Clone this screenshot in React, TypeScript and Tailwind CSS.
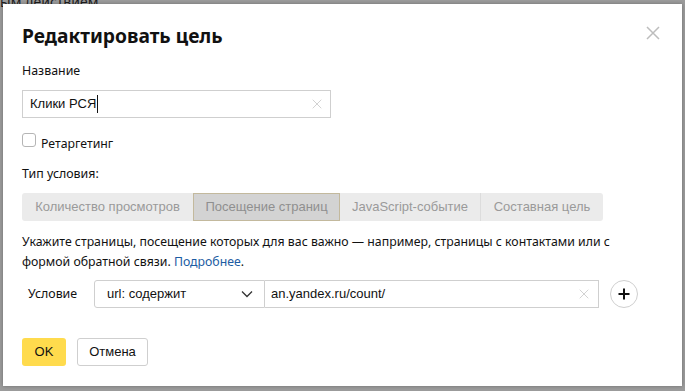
import React from "react";

const sans = "font-['Noto_Sans','Open_Sans',sans-serif]";
const arial = "font-['Liberation_Sans',Arial,sans-serif]";

function XIcon({ size, color, stroke }: { size: number; color: string; stroke: number }) {
  return (
    <svg width={size} height={size} viewBox="0 0 14 14" fill="none">
      <path d="M1 1L13 13M13 1L1 13" stroke={color} strokeWidth={stroke} />
    </svg>
  );
}

export default function App() {
  return (
    <div className="relative w-[685px] h-[391px] overflow-hidden bg-[#9c9c9c]">
      <div className={`absolute left-0 top-[-9px] text-[14px] text-[#1e1e1e] ${sans}`}>ым действием.</div>
      <div className="absolute left-[3px] top-[4px] w-[679px] h-[382px] bg-white shadow-[0_0_4px_rgba(0,0,0,0.3)]">
        <div className="flex flex-col px-[19px] pt-[18px]">
          <div className="flex items-start justify-between">
            <h1 className={`text-[19.2px] font-bold leading-[28px] text-[#111] ${sans}`}>Редактировать цель</h1>
            <div className="mt-[4px] mr-[3px]">
              <XIcon size={14} color="#bdbdbd" stroke={1.5} />
            </div>
          </div>
          <div className={`mt-[12px] text-[12.4px] leading-[18px] text-[#111] ${sans}`}>Название</div>
          <div className="mt-[10px] flex h-[28px] w-[309px] items-center border border-[#cfcfcf] pl-[7px] pr-[8px]">
            <span className={`text-[13px] text-[#111] ${arial}`}>Клики РСЯ</span>
            <span className="ml-[1px] h-[18px] w-px bg-[#111]" />
            <span className="ml-auto">
              <XIcon size={10} color="#c0c0c0" stroke={1} />
            </span>
          </div>
          <label className="mt-[15px] flex items-start gap-[5px]">
            <span className="h-[14px] w-[14px] rounded-[3px] border border-[#b5b5b5] bg-white" />
            <span className={`mt-[2px] text-[12.3px] leading-[18px] text-[#111] ${sans}`}>Ретаргетинг</span>
          </label>
          <div className={`mt-[12px] text-[12.4px] leading-[18px] text-[#111] ${sans}`}>Тип условия:</div>
          <div className={`mt-[10px] flex h-[28px] w-[581px] text-[13px] text-[#9a9a9a] ${arial}`}>
            <div className="flex w-[171px] items-center justify-center rounded-l-[3px] bg-[#ebebeb]">Количество просмотров</div>
            <div className="flex w-[147px] items-center justify-center border border-[#c3b99d] bg-[#d3d3d3] text-[#8f8f8f]">Посещение страниц</div>
            <div className="flex w-[141px] items-center justify-center border-r border-[#dcdcdc] bg-[#ebebeb]">JavaScript-событие</div>
            <div className="flex w-[122px] items-center justify-center rounded-r-[3px] bg-[#ebebeb]">Составная цель</div>
          </div>
          <p className={`mt-[11px] w-[610px] text-[12.3px] leading-[20px] text-[#111] ${sans}`}>
            Укажите страницы, посещение которых для вас важно — например, страницы с контактами или с формой обратной связи.{" "}
            <span className="text-[#1c5ca3]">Подробнее</span>.
          </p>
          <div className="mt-[8px] flex items-center">
            <span className={`ml-[6px] w-[66px] text-[12.4px] text-[#111] ${sans}`}>Условие</span>
            <div className={`flex h-[28px] w-[171px] items-center rounded-l-[3px] border border-[#cfcfcf] pl-[12px] pr-[11px] text-[13px] text-[#111] ${arial}`}>
              url: содержит
              <svg className="ml-auto" width="12" height="8" viewBox="0 0 12 8" fill="none">
                <path d="M1 1.5L6 6.5L11 1.5" stroke="#333" strokeWidth="1.3" />
              </svg>
            </div>
            <div className={`flex h-[28px] w-[334px] items-center border border-l-0 border-[#cfcfcf] pl-[6px] pr-[9px] text-[13px] text-[#111] ${arial}`}>
              an.yandex.ru/count/
              <span className="ml-auto">
                <XIcon size={10} color="#c0c0c0" stroke={1} />
              </span>
            </div>
            <div className="ml-[11px] flex h-[28px] w-[28px] items-center justify-center rounded-full border border-[#cfcfcf]">
              <svg width="12" height="12" viewBox="0 0 12 12">
                <path d="M6 0.5V11.5M0.5 6H11.5" stroke="#111" strokeWidth="2" />
              </svg>
            </div>
          </div>
          <div className={`mt-[30px] flex gap-[11px] text-[13px] text-[#111] ${arial}`}>
            <button className="h-[28px] w-[44px] rounded-[3px] bg-[#ffdb4d]">OK</button>
            <button className="h-[28px] w-[71px] rounded-[3px] border border-[#cfcfcf] bg-white">Отмена</button>
          </div>
        </div>
      </div>
    </div>
  );
}
